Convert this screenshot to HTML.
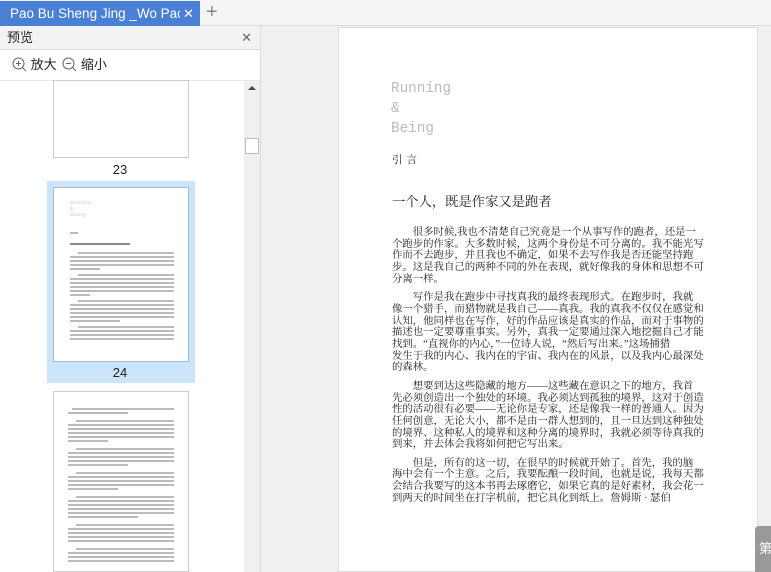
<!DOCTYPE html>
<html style="overflow:hidden;width:771px;height:572px"><head><meta charset="utf-8"><style>
*{margin:0;padding:0;box-sizing:border-box}
body{width:771px;height:572px;overflow:hidden;background:#f0f0f0;font-family:"Liberation Sans","Noto Sans CJK SC",sans-serif;position:relative}
.abs{position:absolute}
.tabbar{left:0;top:0;width:771px;height:26px;background:#f5f5f5;border-bottom:1px solid #ddd}
.tab{left:0;top:1px;width:200px;height:25px;background:#4a7fd6;color:#fff;font-size:13.5px;line-height:25px}
.side{left:0;top:26px;width:261px;height:546px;background:#fff;border-right:1px solid #ddd}
.hd{left:0;top:0;width:260px;height:24px;background:#f2f3f5;border-bottom:1px solid #ddd;font-size:13px;line-height:24px;padding-left:7px;color:#222}
.pg{background:#fff;border:1px solid #ccc}
.ln{position:absolute;height:1.5px;background:#bbb}
.page{left:338px;top:27px;width:420px;height:545px;background:#fff;border:1px solid #ddd;overflow:hidden}
.t{font-family:"Liberation Serif","Noto Serif CJK SC",serif;font-size:10.4px;line-height:12px;color:#222;white-space:nowrap;position:absolute;left:53px}
</style></head><body>
<div class="abs tabbar"></div>
<div class="abs tab"><span style="position:absolute;left:10px;top:0;width:170px;overflow:hidden;white-space:nowrap">Pao Bu Sheng Jing _Wo Pao (</span><span style="position:absolute;left:183px;top:0;font-size:13px">✕</span></div>
<div class="abs" style="left:206px;top:0;height:26px;line-height:24px;font-size:20px;color:#888">+</div>
<div class="abs side">
 <div class="abs hd">预览<span style="position:absolute;right:8px;top:0;color:#666;font-size:13px">✕</span></div>
 <div class="abs" style="left:12px;top:30px;font-size:13px;color:#222;line-height:18px">
  <svg width="15" height="15" style="vertical-align:-3px"><circle cx="6.5" cy="6.5" r="5.5" fill="none" stroke="#666"/><path d="M4 6.5h5M6.5 4v5M10.5 10.5l3.5 3.5" stroke="#666"/></svg> 放大
  <svg width="15" height="15" style="vertical-align:-3px;margin-left:2px"><circle cx="6.5" cy="6.5" r="5.5" fill="none" stroke="#666"/><path d="M4 6.5h5M10.5 10.5l3.5 3.5" stroke="#666"/></svg> 缩小
 </div>
 <div class="abs" style="left:0;top:54px;width:260px;height:1px;background:#e5e5e5"></div>
 <div class="abs pg" style="left:53px;top:54px;width:136px;height:78px"></div>
 <div class="abs" style="left:-2px;top:136px;width:244px;text-align:center;font-size:13px;color:#222">23</div>
 <div class="abs" style="left:47px;top:155px;width:148px;height:202px;background:#cce4f7"></div>
 <div class="abs pg" style="left:53px;top:161px;width:136px;height:175px;border-color:#a8bcd0">
  <div style="position:absolute;left:16px;top:12px;font-size:5px;color:#ccc;line-height:6px;font-family:'Liberation Mono',monospace">Running<br>&amp;<br>Being</div>
  <div class="ln" style="left:16px;top:44px;width:8px"></div>
  <div class="ln" style="left:16px;top:55px;width:60px;background:#888"></div>
  <div style="position:absolute;left:16px;top:64px;width:104px">
   <div class="ln" style="top:0;left:8px;width:96px"></div><div class="ln" style="top:4px;left:0;width:104px"></div><div class="ln" style="top:8px;left:0;width:104px"></div><div class="ln" style="top:12px;left:0;width:104px"></div><div class="ln" style="top:16px;left:0;width:30px"></div>
   <div class="ln" style="top:22px;left:8px;width:96px"></div><div class="ln" style="top:26px;left:0;width:104px"></div><div class="ln" style="top:30px;left:0;width:104px"></div><div class="ln" style="top:34px;left:0;width:104px"></div><div class="ln" style="top:38px;left:0;width:104px"></div><div class="ln" style="top:42px;left:0;width:20px"></div>
   <div class="ln" style="top:48px;left:8px;width:96px"></div><div class="ln" style="top:52px;left:0;width:104px"></div><div class="ln" style="top:56px;left:0;width:104px"></div><div class="ln" style="top:60px;left:0;width:104px"></div><div class="ln" style="top:64px;left:0;width:104px"></div><div class="ln" style="top:68px;left:0;width:50px"></div>
   <div class="ln" style="top:74px;left:8px;width:96px"></div><div class="ln" style="top:78px;left:0;width:104px"></div><div class="ln" style="top:82px;left:0;width:104px"></div><div class="ln" style="top:86px;left:0;width:104px"></div>
  </div>
 </div>
 <div class="abs" style="left:-2px;top:339px;width:244px;text-align:center;font-size:13px;color:#222">24</div>
 <div class="abs pg" style="left:53px;top:365px;width:136px;height:181px">
  <div style="position:absolute;left:14px;top:16px;width:106px">
   <div class="ln" style="top:0;left:4px;width:102px"></div><div class="ln" style="top:4px;left:0;width:60px"></div>
   <div class="ln" style="top:12px;left:8px;width:98px"></div><div class="ln" style="top:16px;left:0;width:106px"></div><div class="ln" style="top:20px;left:0;width:106px"></div><div class="ln" style="top:24px;left:0;width:106px"></div><div class="ln" style="top:28px;left:0;width:106px"></div><div class="ln" style="top:32px;left:0;width:40px"></div>
   <div class="ln" style="top:40px;left:8px;width:98px"></div><div class="ln" style="top:44px;left:0;width:106px"></div><div class="ln" style="top:48px;left:0;width:106px"></div><div class="ln" style="top:52px;left:0;width:106px"></div><div class="ln" style="top:56px;left:0;width:60px"></div>
   <div class="ln" style="top:64px;left:8px;width:98px"></div><div class="ln" style="top:68px;left:0;width:106px"></div><div class="ln" style="top:72px;left:0;width:106px"></div><div class="ln" style="top:76px;left:0;width:106px"></div><div class="ln" style="top:80px;left:0;width:50px"></div>
   <div class="ln" style="top:88px;left:8px;width:98px"></div><div class="ln" style="top:92px;left:0;width:106px"></div><div class="ln" style="top:96px;left:0;width:106px"></div><div class="ln" style="top:100px;left:0;width:106px"></div><div class="ln" style="top:104px;left:0;width:106px"></div><div class="ln" style="top:108px;left:0;width:70px"></div>
   <div class="ln" style="top:116px;left:8px;width:98px"></div><div class="ln" style="top:120px;left:0;width:106px"></div><div class="ln" style="top:124px;left:0;width:106px"></div><div class="ln" style="top:128px;left:0;width:106px"></div><div class="ln" style="top:132px;left:0;width:106px"></div>
   <div class="ln" style="top:140px;left:8px;width:98px"></div><div class="ln" style="top:144px;left:0;width:106px"></div><div class="ln" style="top:148px;left:0;width:106px"></div><div class="ln" style="top:152px;left:0;width:106px"></div>
  </div>
 </div>
 <div class="abs" style="left:244px;top:55px;width:16px;height:491px;background:#f0f0f0"></div>
 <div class="abs" style="left:248px;top:60px;width:0;height:0;border-left:4px solid transparent;border-right:4px solid transparent;border-bottom:4px solid #444"></div>
 <div class="abs" style="left:245px;top:112px;width:14px;height:16px;background:#fff;border:1px solid #bbb"></div>
</div>
<div class="abs page">
 <div class="abs" style="left:52px;top:51px;font-family:'Liberation Mono','DejaVu Sans Mono',monospace;font-size:14.3px;line-height:20px;color:#bbb">Running<br>&amp;<br>Being</div>
 <div class="t" style="top:127px;font-size:10.5px;letter-spacing:4px">引言</div>
 <div class="t" style="top:166px;font-size:13.3px;line-height:15px">一个人，既是作家又是跑者</div>
 <div class="t" style="top:199px">　　很多时候,我也不清楚自己究竟是一个从事写作的跑者，还是一</div>
 <div class="t" style="top:210.7px">个跑步的作家。大多数时候，这两个身份是不可分离的。我不能光写</div>
 <div class="t" style="top:222.4px">作而不去跑步，并且我也不确定，如果不去写作我是否还能坚持跑</div>
 <div class="t" style="top:234.1px">步。这是我自己的两种不同的外在表现，就好像我的身体和思想不可</div>
 <div class="t" style="top:245.8px">分离一样。</div>
 <div class="t" style="top:264.2px">　　写作是我在跑步中寻找真我的最终表现形式。在跑步时，我就</div>
 <div class="t" style="top:275.9px">像一个猎手，而猎物就是我自己——真我。我的真我不仅仅在感觉和</div>
 <div class="t" style="top:287.6px">认知，他同样也在写作，好的作品应该是真实的作品，而对于事物的</div>
 <div class="t" style="top:299.3px">描述也一定要尊重事实。另外，真我一定要通过深入地挖掘自己才能</div>
 <div class="t" style="top:311px">找到。“直视你的内心，”一位诗人说，“然后写出来。”这场捕猎</div>
 <div class="t" style="top:322.7px">发生于我的内心、我内在的宇宙、我内在的风景，以及我内心最深处</div>
 <div class="t" style="top:334.4px">的森林。</div>
 <div class="t" style="top:352.8px">　　想要到达这些隐藏的地方——这些藏在意识之下的地方，我首</div>
 <div class="t" style="top:364.5px">先必须创造出一个独处的环境。我必须达到孤独的境界，这对于创造</div>
 <div class="t" style="top:376.2px">性的活动很有必要——无论你是专家，还是像我一样的普通人。因为</div>
 <div class="t" style="top:387.9px">任何创意，无论大小，都不是由一群人想到的，且一旦达到这种独处</div>
 <div class="t" style="top:399.6px">的境界、这种私人的境界和这种分离的境界时，我就必须等待真我的</div>
 <div class="t" style="top:411.3px">到来，并去体会我将如何把它写出来。</div>
 <div class="t" style="top:429.7px">　　但是，所有的这一切，在很早的时候就开始了。首先，我的脑</div>
 <div class="t" style="top:441.4px">海中会有一个主意。之后，我要酝酿一段时间，也就是说，我每天都</div>
 <div class="t" style="top:453.1px">会结合我要写的这本书再去琢磨它，如果它真的是好素材，我会花一</div>
 <div class="t" style="top:464.8px">到两天的时间坐在打字机前，把它具化到纸上。詹姆斯 · 瑟伯</div>
</div>
<div class="abs" style="left:755px;top:526px;width:20px;height:46px;background:#999;border-radius:4px 0 0 0;color:#fff;font-size:13px;padding:12px 0 0 4px;overflow:hidden">第</div>
</body></html>
